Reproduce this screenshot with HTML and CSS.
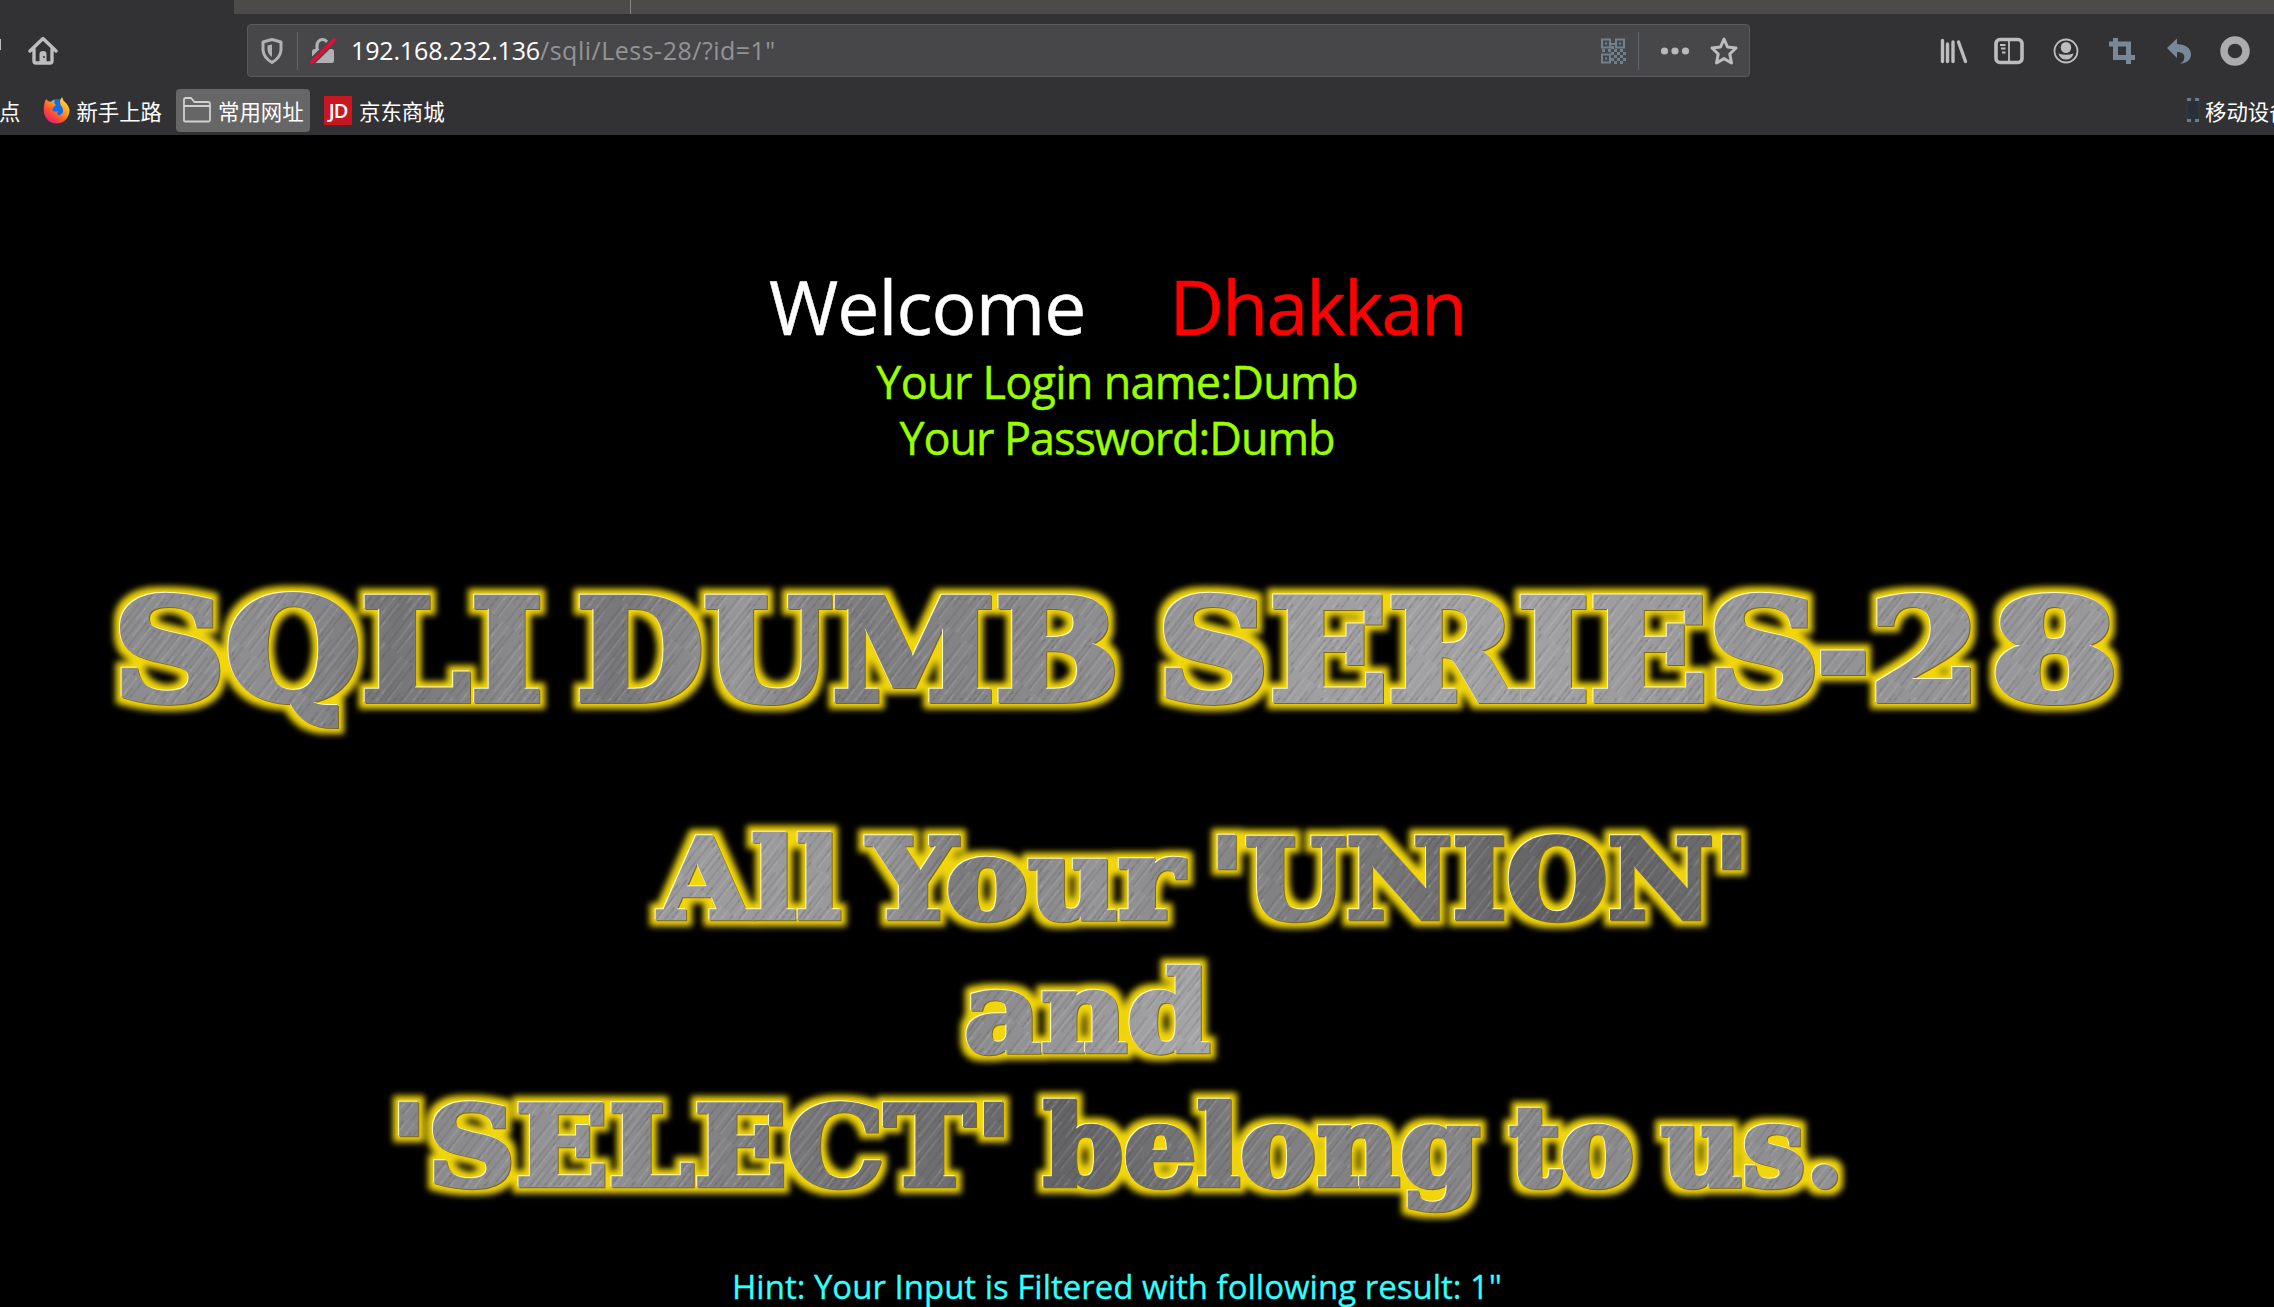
FILE: index.html
```html
<!DOCTYPE html>
<html lang="zh-CN">
<head>
<meta charset="utf-8">
<title>192.168.232.136/sqli/Less-28/</title>
<link rel="stylesheet" href="styles.css">
</head>
<body>
<header class="chrome">
  <div class="tabstrip"><div class="tab"></div></div>
  <div class="toolbar">
    <div class="nav">
      <span class="edge"></span>
      <svg class="home" width="30" height="30" viewBox="0 0 30 30"><path d="M2 15 L15 2.500 L28 15 M6 13 V25 Q6 27 8 27 H22 Q24 27 24 25 V13" fill="none" stroke="#bdbdbe" stroke-width="3.400" stroke-linecap="round" stroke-linejoin="round"/><path d="M11.500 28 V18 Q11.500 15 15 15 Q18.500 15 18.500 18 V28 Z" fill="#bdbdbe"/><circle cx="16" cy="21" r="1" fill="#323234"/></svg>
    </div>
    <div class="urlbar">
      <svg class="shield" width="24" height="28" viewBox="0 0 24 28"><path d="M12 2.500 L21 5 V13 Q20.500 20.500 12 25.500 Q3.500 20.500 3 13 V5 Z" fill="none" stroke="#b1b1b3" stroke-width="3" stroke-linejoin="round"/><path d="M12 7.500 V20 Q8 17.500 7.500 12.500 V8.500 Z" fill="#b1b1b3"/></svg>
      <span class="rule"></span>
      <svg class="lock" width="28" height="28" viewBox="0 0 28 28"><path d="M8 13 V8.500 A5.500 6 0 0 1 19 8.500 V13" fill="none" stroke="#b1b1b3" stroke-width="3.200"/><rect x="3" y="12" width="22" height="14" rx="2.500" fill="#b1b1b3"/><path d="M1.500 26 L26 2" stroke="#474749" stroke-width="7"/><path d="M3 25 L25 3" stroke="#ff0039" stroke-width="3.200" stroke-linecap="round"/></svg>
      <div class="url"><b>192.168.232.136</b>/sqli/Less-28/?id=1"</div>
      <svg class="qr" width="26" height="28" viewBox="0 0 26 28"><g fill="none" stroke="#70808f" stroke-width="2"><path d="M2 2.500h8v8h-8zM16 2.500h8v8h-8zM2 17.500h8v8h-8z"/><path d="M10 7h6"/></g><g fill="#70808f"><path d="M5 5.500h2v2h-2zM19 5.500h2v2h-2zM5 20.500h2v2h-2z"/><path d="M2 12h3v3h-3zM8 12h3v3h-3zM11 9h3v3h-3zM14 12h3v3h-3zM20 12h3v3h-3zM11 15h3v3h-3zM17 15h3v3h-3zM23 15h3v3h-3zM14 18h3v3h-3zM20 18h3v3h-3zM11 21h3v3h-3zM17 21h3v3h-3zM23 21h3v3h-3zM14 24h3v3h-3zM20 24h3v3h-3z"/></g></svg>
      <span class="rule"></span>
      <svg class="dots" width="30" height="10" viewBox="0 0 30 10"><g fill="#b9b9ba"><circle cx="4.500" cy="5" r="3.600"/><circle cx="15" cy="5" r="3.600"/><circle cx="25.500" cy="5" r="3.600"/></g></svg>
      <svg class="star" width="30" height="30" viewBox="0 0 30 30"><path d="M15 3 L18.500 11 L27 12 L20.800 18 L22.500 27 L15 22.600 L7.500 27 L9.200 18 L3 12 L11.500 11 Z" fill="none" stroke="#bdbdbe" stroke-width="3" stroke-linejoin="round"/></svg>
    </div>
    <div class="tools">
      <svg width="30" height="30" viewBox="0 0 30 30"><g stroke="#bdbdbe" stroke-width="3.400" stroke-linecap="round"><path d="M4.500 4.500v21M9.500 8v17.500M15 6v19.500M20.500 6l7 19.500"/></g></svg>
      <svg width="30" height="30" viewBox="0 0 30 30"><rect x="2" y="3.500" width="26" height="23" rx="4" fill="none" stroke="#bdbdbe" stroke-width="3.600"/><path d="M15 4v22M6 9h5.500M7 12.500h4.500M8 16.500h3.500" stroke="#bdbdbe" stroke-width="1.800"/></svg>
      <svg width="30" height="30" viewBox="0 0 30 30"><circle cx="15" cy="15" r="11.500" fill="none" stroke="#bdbdbe" stroke-width="1.800"/><ellipse cx="15" cy="11.500" rx="5.200" ry="5.500" fill="#bdbdbe"/><path d="M7.500 17.500 Q15 20 22.500 17.500 Q21 23.500 15 23.500 Q9 23.500 7.500 17.500Z" fill="#bdbdbe"/></svg>
      <svg width="30" height="30" viewBox="0 0 30 30"><path d="M8.500 2v19.500H28M2 8h19.500V28" fill="none" stroke="#788899" stroke-width="5"/></svg>
      <svg width="30" height="30" viewBox="0 0 30 30"><path d="M3 12 L13 2.500 V8 Q27 9 27 19 Q27 26 16 28 Q22 24 20 19 Q18.500 16 13 16 V22 Z" fill="#788899"/></svg>
      <svg width="30" height="30" viewBox="0 0 30 30"><circle cx="15" cy="15" r="11" fill="none" stroke="#acacac" stroke-width="7.500"/></svg>
    </div>
  </div>
  <nav class="bookmarks">
    <span class="mark first">点</span>
    <span class="mark fox"><svg width="28" height="28" viewBox="0 0 28 28"><defs><linearGradient id="fire" x1="1" y1="0" x2="0.200" y2="1"><stop offset="0" stop-color="#fff44f"/><stop offset="0.400" stop-color="#ffa41c"/><stop offset="0.700" stop-color="#ff5030"/><stop offset="1" stop-color="#e31587"/></linearGradient></defs><circle cx="14" cy="14" r="11" fill="#0a6fe8"/><path d="M3 3 Q5 6 8 6 Q10 4 12 4 Q10 7 13 9 Q10 11 9 14 Q12 17 15 15 Q13 20 17 19 Q22 16 19 11 Q15 6 19 1 Q20 5 23 7 Q28 13 26 18 Q23 27 14 27.500 Q3 27 1 17 Q0 10 3 3Z" fill="url(#fire)"/></svg>新手上路</span>
    <span class="mark folder"><svg width="30" height="28" viewBox="0 0 30 28"><path d="M2 24.500 V3.500 Q2 2 3.500 2 H9 L12.500 6 H26 Q28 6 28 8 V24 Q28 25.500 26.500 25.500 H3.500 Q2 25.500 2 24.500Z M2 10H28" fill="none" stroke="#d0d0d0" stroke-width="1.800"/></svg>常用网址</span>
    <span class="mark shop"><i class="jd">JD</i>京东商城</span>
    <span class="mark mobile"><svg width="16" height="28" viewBox="0 0 16 28"><rect x="2" y="2" width="12" height="24" rx="2" fill="#293037" stroke="#333c44" stroke-width="1"/><path d="M2 3.500h4M10 3.500h4M2 24.500h4M10 24.500h4" stroke="#6b7b8a" stroke-width="3"/></svg>移动设备</span>
  </nav>
</header>
<main class="page">
  <h1 class="welcome"><span>Welcome</span><span class="name">Dhakkan</span></h1>
  <p class="login">Your Login name:Dumb</p>
  <p class="login pass">Your Password:Dumb</p>
  <svg class="banner" width="2274" height="720" viewBox="0 540 2274 720">
    <defs>
      <linearGradient id="steel-title" gradientUnits="userSpaceOnUse" x1="120" y1="560" x2="2120" y2="760"><stop offset="0" stop-color="#8c8c8e"/><stop offset="0.080" stop-color="#8e8e90"/><stop offset="0.140" stop-color="#757577"/><stop offset="0.200" stop-color="#8a8a8c"/><stop offset="0.250" stop-color="#77777a"/><stop offset="0.310" stop-color="#979799"/><stop offset="0.360" stop-color="#7c7c7e"/><stop offset="0.450" stop-color="#88888a"/><stop offset="0.600" stop-color="#a0a0a2"/><stop offset="0.700" stop-color="#a2a2a4"/><stop offset="0.850" stop-color="#929295"/><stop offset="1" stop-color="#9a9a9d"/></linearGradient>
      <linearGradient id="steel-union" gradientUnits="userSpaceOnUse" x1="660" y1="830" x2="1740" y2="920"><stop offset="0" stop-color="#9c9c9e"/><stop offset="0.200" stop-color="#99999b"/><stop offset="0.280" stop-color="#7b7b7d"/><stop offset="0.400" stop-color="#949496"/><stop offset="0.550" stop-color="#848486"/><stop offset="0.850" stop-color="#606062"/><stop offset="1" stop-color="#707072"/></linearGradient>
      <linearGradient id="steel-and" gradientUnits="userSpaceOnUse" x1="960" y1="960" x2="1210" y2="1050"><stop offset="0" stop-color="#858587"/><stop offset="0.500" stop-color="#98989a"/><stop offset="1" stop-color="#a8a8aa"/></linearGradient>
      <linearGradient id="steel-select" gradientUnits="userSpaceOnUse" x1="400" y1="1100" x2="1840" y2="1190"><stop offset="0" stop-color="#868688"/><stop offset="0.120" stop-color="#949496"/><stop offset="0.300" stop-color="#757577"/><stop offset="0.380" stop-color="#6e6e70"/><stop offset="0.460" stop-color="#646466"/><stop offset="0.600" stop-color="#808082"/><stop offset="1" stop-color="#929294"/></linearGradient>
      <filter id="metal" x="0" y="540" width="2274" height="720" filterUnits="userSpaceOnUse" color-interpolation-filters="sRGB">
        <feMorphology in="SourceAlpha" operator="dilate" radius="6" result="fat"/>
        <feGaussianBlur in="fat" stdDeviation="3" result="soft"/>
        <feFlood flood-color="#f2d60c"/>
        <feComposite in2="soft" operator="in" result="halo"/>
        <feOffset in="SourceAlpha" dx="-1.500" dy="-1.500" result="up"/>
        <feFlood flood-color="#fffbd0"/>
        <feComposite in2="up" operator="in" result="light"/>
        <feOffset in="SourceAlpha" dx="1.200" dy="1.200" result="down"/>
        <feFlood flood-color="#806a10"/>
        <feComposite in2="down" operator="in" result="dark"/>
        <feMerge><feMergeNode in="halo"/><feMergeNode in="dark"/><feMergeNode in="light"/><feMergeNode in="SourceGraphic"/></feMerge>
      </filter>
      <pattern id="brush" width="29" height="90" patternUnits="userSpaceOnUse" patternTransform="rotate(38)"><path d="M3 0v60M12 20v70M19 50v40M25 0v45" stroke="#fff" stroke-opacity="0.130" stroke-width="1.100"/><path d="M6 10v80M10 0v50M17 30v60M22 5v65M28 40v50" stroke="#222" stroke-opacity="0.170" stroke-width="1.100"/></pattern>
      <g id="title">
        <text x="113" y="700" textLength="430" lengthAdjust="spacingAndGlyphs">SQLI</text>
        <text x="576" y="700" textLength="543" lengthAdjust="spacingAndGlyphs">DUMB</text>
        <text x="1157" y="700" textLength="663" lengthAdjust="spacingAndGlyphs">SERIES</text>
        <text x="1817" y="700" textLength="52" lengthAdjust="spacingAndGlyphs">-</text>
        <text x="1869" y="700" textLength="112" lengthAdjust="spacingAndGlyphs">2</text>
        <text x="1990" y="700" textLength="129" lengthAdjust="spacingAndGlyphs">8</text>
      </g>
      <g id="union">
        <text x="659" y="918" textLength="182" lengthAdjust="spacingAndGlyphs">All</text>
        <text x="868" y="918" textLength="315" lengthAdjust="spacingAndGlyphs">Your</text>
        <text x="1209" y="918" textLength="540" lengthAdjust="spacingAndGlyphs">'UNION'</text>
      </g>
      <g id="and">
        <text x="964" y="1051" textLength="246" lengthAdjust="spacingAndGlyphs">and</text>
      </g>
      <g id="select">
        <text x="390" y="1185" textLength="622" lengthAdjust="spacingAndGlyphs">'SELECT'</text>
        <text x="1043" y="1185" textLength="437" lengthAdjust="spacingAndGlyphs">belong</text>
        <text x="1509" y="1185" textLength="125" lengthAdjust="spacingAndGlyphs">to</text>
        <text x="1661" y="1185" textLength="183" lengthAdjust="spacingAndGlyphs">us.</text>
      </g>
    </defs>
    <g class="lettering">
      <g class="metal">
        <use href="#title" class="title"/>
        <use href="#union" class="union"/>
        <use href="#and" class="and"/>
        <use href="#select" class="select"/>
      </g>
      <g class="grain">
        <use href="#title" class="large"/>
        <use href="#union"/>
        <use href="#and"/>
        <use href="#select"/>
      </g>
    </g>
  </svg>
  <p class="hint">Hint: Your Input is Filtered with following result: 1"</p>
</main>
</body>
</html>
```
FILE: styles.css
```css
* { box-sizing: border-box; }
html, body { margin: 0; height: 1307px; overflow: hidden; background: #000; }
body { width: 2274px; font-family: "Open Sans", "Noto Sans CJK SC", sans-serif; }
svg { display: block; flex: none; }
.chrome { height: 135px; background: #323234; overflow: hidden; }
.tabstrip { height: 14px; margin-left: 234px; background: #4c4b47; }
.tab { width: 397px; height: 14px; border-right: 1px solid #858583; }
.toolbar { height: 73px; display: flex; align-items: center; }
.nav { width: 247px; display: flex; align-items: center; }
.edge { width: 1px; height: 11px; background: #bdbdbe; margin-top: -13px; }
.home { margin-left: 27px; }
.urlbar { width: 1503px; height: 53px; border: 1px solid #5b5b5d; border-radius: 4px; background: #474749; display: flex; align-items: center; }
.shield { margin-left: 12px; }
.rule { width: 1px; height: 38px; background: #61666d; }
.shield + .rule { margin-left: 13px; }
.lock { margin-left: 11px; }
.url { flex: 1; margin: -2px 0 0 14px; font-size: 25px; line-height: 34px; letter-spacing: 0.5px; color: #939395; white-space: nowrap; }
.url b { font-weight: 400; letter-spacing: -0.15px; color: #fff; }
.qr { margin-right: 12px; }
.dots { margin-left: 21px; }
.star { margin: 0 10px 0 19px; }
.tools { margin-left: 187.500px; display: flex; gap: 26.500px; }
.bookmarks { height: 48px; display: flex; align-items: center; color: #fff; font: 21.400px "Noto Sans CJK SC", sans-serif; white-space: nowrap; }
.mark { display: flex; align-items: center; height: 43px; margin-top: -2px; border-radius: 4px; flex: none; }
.first { margin-left: -1px; }
.fox { margin-left: 23px; gap: 5px; }
.folder { margin-left: 14px; width: 134px; padding-left: 6px; gap: 6px; background: #666667; }
.shop { margin-left: 14px; gap: 7px; }
.jd { width: 28px; height: 29px; background: #c91623; font: 600 20px/29px "Open Sans", sans-serif; letter-spacing: -1px; text-align: center; }
.mobile { margin-left: auto; width: 89px; gap: 4px; overflow: hidden; }
.page { width: 2274px; height: 1172px; overflow: hidden; display: flex; flex-direction: column; }
.welcome { flex: none; margin: 119px 0 0 769px; height: 100px; line-height: 104px; font-size: 75px; font-weight: 400; color: #fff; display: flex; letter-spacing: -0.9px; -webkit-text-stroke: 0.5px; }
.name { color: #f00; margin-left: 84px; letter-spacing: -1.8px; }
.login { flex: none; margin: 0; width: 2234px; text-align: center; height: 56px; line-height: 55px; font-size: 45px; letter-spacing: -0.75px; color: #9f0; -webkit-text-stroke: 0.4px; }
.pass { letter-spacing: -1.05px; }
.banner { margin-top: 74px; }
.hint { flex: none; margin: 4px 0 0; width: 2234px; text-align: center; line-height: 46px; font-size: 33px; color: #3ff; white-space: nowrap; -webkit-text-stroke: 0.3px; }
.lettering { font-family: "DejaVu Serif", serif; font-weight: 700; font-size: 111px; }
.title, .large { font-size: 140px; }
.metal { filter: url(#metal); stroke-width: 4.500px; stroke-linejoin: miter; stroke-miterlimit: 3; }
.title { fill: url(#steel-title); stroke: url(#steel-title); stroke-width: 6px; }
.union { fill: url(#steel-union); stroke: url(#steel-union); }
.and { fill: url(#steel-and); stroke: url(#steel-and); }
.select { fill: url(#steel-select); stroke: url(#steel-select); }
.grain { fill: url(#brush); stroke: url(#brush); stroke-width: 4px; }
```
